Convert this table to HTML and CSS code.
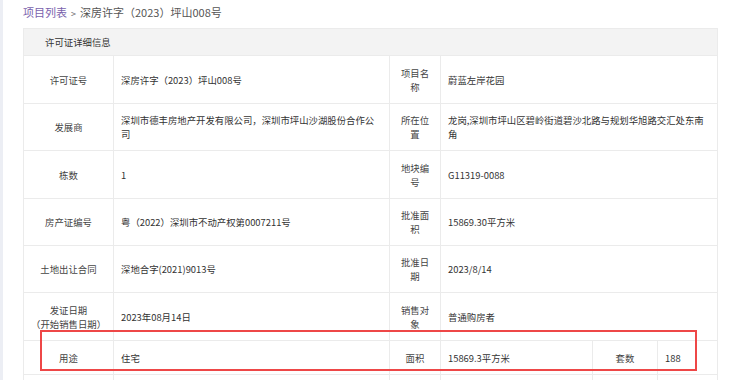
FILE: index.html
```html
<!DOCTYPE html>
<html lang="zh">
<head>
<meta charset="utf-8">
<link rel="stylesheet" href="styles.css">
</head>
<body>
<div class="page">
  <div class="crumb"><span class="crumb-link">项目列表</span><span class="crumb-sep">&gt;</span><span>深房许字（2023）坪山008号</span></div>
  <div class="panel">
    <table class="info">
      <colgroup>
        <col class="c1"><col class="c2"><col class="c3"><col class="c4"><col class="c5"><col class="c6">
      </colgroup>
      <tr class="head"><td colspan="6">许可证详细信息</td></tr>
      <tr class="r48">
        <td class="lab">许可证号</td><td class="val">深房许字（2023）坪山008号</td>
        <td class="lab">项目名称</td><td class="val" colspan="3">蔚蓝左岸花园</td>
      </tr>
      <tr class="r47">
        <td class="lab">发展商</td><td class="val">深圳市德丰房地产开发有限公司，深圳市坪山沙湖股份合作公司</td>
        <td class="lab">所在位置</td><td class="val" colspan="3">龙岗,深圳市坪山区碧岭街道碧沙北路与规划华旭路交汇处东南角</td>
      </tr>
      <tr class="r48">
        <td class="lab">栋数</td><td class="val">1</td>
        <td class="lab">地块编号</td><td class="val" colspan="3">G11319-0088</td>
      </tr>
      <tr class="r47">
        <td class="lab">房产证编号</td><td class="val">粤（2022）深圳市不动产权第0007211号</td>
        <td class="lab">批准面积</td><td class="val" colspan="3">15869.30平方米</td>
      </tr>
      <tr class="r47">
        <td class="lab">土地出让合同</td><td class="val">深地合字(2021)9013号</td>
        <td class="lab">批准日期</td><td class="val" colspan="3">2023/8/14</td>
      </tr>
      <tr class="r48">
        <td class="lab">发证日期<br>（开始销售日期）</td><td class="val">2023年08月14日</td>
        <td class="lab">销售对象</td><td class="val" colspan="3">普通购房者</td>
      </tr>
      <tr class="r34">
        <td class="lab low">用途</td><td class="val low">住宅</td>
        <td class="lab low">面积</td><td class="val low">15869.3平方米</td>
        <td class="lab low">套数</td><td class="val low">188</td>
      </tr>
      <tr class="r34">
        <td class="lab"></td><td class="val"></td>
        <td class="lab"></td><td class="val"></td>
        <td class="lab"></td><td class="val"></td>
      </tr>
    </table>
    <div class="mark"></div>
  </div>
</div>
</body>
</html>
```

FILE: styles.css
```css
html, body {
  margin: 0;
  padding: 0;
  background: #ffffff;
}
body {
  font-family: "Microsoft YaHei", "Noto Sans CJK SC", "Noto Sans", sans-serif;
  color: #333333;
  overflow: hidden;
}
.page {
  border-left: 3px solid #eceef4;
  padding: 0 0 0 20px;
  height: 380px;
  box-sizing: border-box;
  position: relative;
}
.crumb {
  height: 28px;
  box-sizing: border-box;
  padding-top: 4px;
  font-size: 11px;
  line-height: 17px;
  color: #555555;
}
.crumb-link {
  color: #7a62ad;
}
.crumb-sep {
  font-size: 9px;
  margin: 0 4px;
  color: #666666;
}
.panel {
  position: relative;
  width: 694px;
}
.info {
  width: 694px;
  border-collapse: collapse;
  table-layout: fixed;
  font-size: 9.4px;
  line-height: 14px;
}
.info td {
  border: 1px solid #ebebeb;
  padding: 0 7px;
  vertical-align: middle;
}
.c1 { width: 90px; }
.c2 { width: 276px; }
.c3 { width: 51px; }
.c4 { width: 152px; }
.c5 { width: 65px; }
.c6 { width: 60px; }
.head td {
  background: #f3f3f3;
  height: 26px;
  padding-left: 21px;
  color: #333333;
}
.r48 td { height: 47px; }
.r47 td { height: 46px; }
.r34 td { height: 33px; }
.low {
  padding-top: 1px;
}
.lab {
  text-align: center;
  color: #444444;
}
.val {
  text-align: left;
  color: #333333;
}
.mark {
  position: absolute;
  left: 17px;
  top: 302px;
  width: 653px;
  height: 37px;
  border: 2px solid #ee4747;
}
```
